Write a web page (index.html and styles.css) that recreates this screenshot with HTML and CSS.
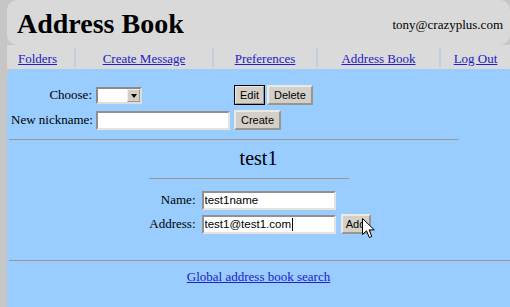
FILE: index.html
```html
<!DOCTYPE html>
<html lang="en">
<head>
    <meta charset="UTF-8">
    <title>Address Book</title>
    <link rel="stylesheet" href="styles.css">
</head>
<body>
    <div class="page">
        <!-- top bar -->
        <header class="masthead">
            <h1 class="masthead-title">Address Book</h1>
            <span class="masthead-user">tony@crazyplus.com</span>
        </header>

        <!-- menu -->
        <ul class="menu">
            <li><a href="#">Folders</a></li>
            <li><a href="#">Create Message</a></li>
            <li><a href="#">Preferences</a></li>
            <li><a href="#">Address Book</a></li>
            <li><a href="#">Log Out</a></li>
        </ul>

        <main class="panel">
            <form class="nick-form">
                <label class="form-label">Choose:</label>
                <span class="select-box">
                    <select class="select"></select>
                </span>
                <div class="btn-row">
                    <button type="button" class="btn btn-default">Edit</button>
                    <button type="button" class="btn">Delete</button>
                </div>

                <label class="form-label">New nickname:</label>
                <input type="text" class="field field-nick">
                <div class="btn-row">
                    <button type="button" class="btn">Create</button>
                </div>
            </form>

            <hr class="rule rule-top">

            <h2 class="entry-name">test1</h2>

            <div class="entry">
                <hr class="rule rule-short">
                <div class="entry-grid">
                    <label class="form-label">Name:</label>
                    <input type="text" class="field" value="test1name">
                    <span></span>

                    <label class="form-label">Address:</label>
                    <span class="field-wrap">
                        <input type="text" class="field" value="test1@test1.com">
                        <span class="caret"></span>
                    </span>
                    <button type="button" class="btn btn-add">Add</button>

                    <svg class="pointer" width="14" height="22" viewBox="0 0 14 22">
                        <path d="M0.5 0.5 L0.5 16.5 L4.5 12.8 L7.3 19.5 L9.8 18.4 L7.1 11.9 L12.3 11.9 Z"
                              fill="#fff" stroke="#000" stroke-width="1" stroke-linejoin="miter"/>
                    </svg>
                </div>
            </div>

            <hr class="rule rule-bottom">

            <div class="search">
                <a href="#">Global address book search</a>
            </div>
        </main>
    </div>
</body>
</html>
```

FILE: styles.css
```css
body {
    margin: 0;
    background: #c6c6c6;
    font-family: 'Liberation Serif', 'Times New Roman', serif;
    font-size: 13px;
    color: #000;
}

a {
    color: #2020c8;
}

.page {
    padding-left: 7px;
    height: 307px;
    display: flex;
    flex-direction: column;
    overflow: hidden;
}

/* header */
.masthead {
    height: 45px;
    background: #d9d9d9;
    border-radius: 10px;
    display: flex;
    align-items: center;
    justify-content: space-between;
    padding: 0 7px 0 10px;
}

.masthead-title {
    margin: 0;
    font-size: 28px;
    font-weight: bold;
    line-height: 30px;
    padding-top: 2px;
}

.masthead-user {
    font-size: 13px;
    padding-top: 4px;
}

/* menu */
.menu {
    list-style: none;
    margin: 0;
    padding: 0;
    height: 24px;
    background: #dadada;
    display: grid;
    grid-template-columns: 67px 138px 104px 123px 1fr;
    align-items: center;
}

.menu li {
    height: 16px;
    line-height: 16px;
    text-align: center;
    padding-top: 3px;
}

.menu li + li {
    border-left: 2px solid #c3d0dc;
}

.menu li:first-child {
    text-align: left;
    padding-left: 11px;
}

/* blue panel */
.panel {
    flex: 1;
    background: #99ccff;
    border-top-left-radius: 8px;
    padding: 15px 0 0 0;
}

.nick-form {
    display: grid;
    grid-template-columns: 82px 134px auto;
    grid-template-rows: 22px 22px;
    column-gap: 4px;
    row-gap: 3px;
    align-items: center;
    padding-left: 4px;
}

.form-label {
    text-align: right;
    white-space: nowrap;
}

.nick-form .form-label {
    padding-right: 1px;
}

.select-box {
    position: relative;
    width: 46px;
    height: 17px;
    box-sizing: border-box;
    border: 2px inset #e0ddd6;
    background: #fff;
    margin-left: -1px;
}

.select {
    appearance: none;
    border: none;
    background: transparent;
    width: 100%;
    height: 100%;
    padding: 0;
}

.select-box::after {
    content: '';
    position: absolute;
    right: 0;
    top: 0;
    width: 13px;
    height: 13px;
    background: #d4d0c8;
    box-sizing: border-box;
    border: 1px outset #eeeeee;
}

.select-box::before {
    content: '';
    position: absolute;
    right: 3px;
    top: 5px;
    border-left: 3.5px solid transparent;
    border-right: 3.5px solid transparent;
    border-top: 4px solid #000;
    z-index: 1;
}

.btn-row {
    display: flex;
    gap: 2px;
    margin-left: -1px;
}

.btn {
    font-family: 'Liberation Sans', Arial, sans-serif;
    font-size: 11px;
    height: 20px;
    padding: 0 5px;
    background: #d4d0c8;
    border: 2px outset #ece9e2;
    color: #000;
    line-height: 14px;
}

.btn-default {
    outline: 1px solid #000;
    outline-offset: -1px;
    padding: 0 4px;
}

.field {
    font-family: 'Liberation Sans', Arial, sans-serif;
    font-size: 11.5px;
    height: 19px;
    box-sizing: border-box;
    border: 2px inset #e6e3dc;
    background: #fff;
    padding: 0 1px;
    margin: 0;
    width: 134px;
}

.field-nick {
    margin-left: -1px;
}

.rule {
    border: none;
    height: 2px;
    box-sizing: border-box;
    border-top: 1px solid #8e9aa6;
    border-bottom: 1px solid #abc7e2;
    margin: 0;
}

.rule-top {
    margin: 8px 0 0 2px;
    width: 450px;
}

.entry-name {
    margin: 6px 0 0;
    font-size: 20px;
    font-weight: normal;
    line-height: 23px;
    text-align: center;
}

.entry {
    width: 222px;
    margin: 0 auto;
}

.rule-short {
    margin: 8px 0 0 1px;
    width: 200px;
}

.entry-grid {
    position: relative;
    margin-top: 10px;
    display: grid;
    grid-template-columns: 49px 134px 30px;
    grid-template-rows: 20px 20px;
    column-gap: 5px;
    row-gap: 4px;
    align-items: center;
}

.entry-grid .form-label {
    padding-right: 1px;
}

.field-wrap {
    position: relative;
    height: 19px;
}

.caret {
    position: absolute;
    left: 90px;
    top: 3px;
    width: 1px;
    height: 13px;
    background: #000;
}

.btn-add {
    padding: 0 3px;
    width: 30px;
}

.pointer {
    position: absolute;
    left: 214px;
    top: 28px;
}

.rule-bottom {
    margin: 26px 0 0 2px;
}

.search {
    margin-top: 7px;
    text-align: center;
    line-height: 15px;
}
```
